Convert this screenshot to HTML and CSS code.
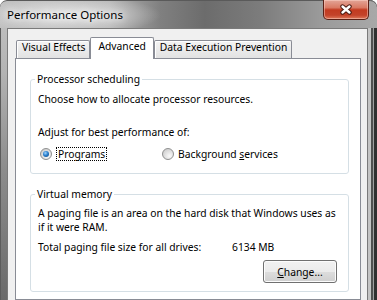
FILE: index.html
```html
<!DOCTYPE html>
<html lang="en">
<head>
  <meta charset="UTF-8" />
  <title>Performance Options</title>
  <link rel="stylesheet" href="styles.css">
</head>
<body>

  <div class="window">
    <div class="titlebar">
      <span class="title">Performance Options</span>
      <button class="close" aria-label="Close">
        <svg width="14" height="11" viewBox="0 0 14 11">
          <path d="M3.5 2.5l7 6M10.5 2.5l-7 6" stroke="#4a1a12" stroke-width="4.4" stroke-linecap="round" fill="none"/>
          <path d="M3.5 2.5l7 6M10.5 2.5l-7 6" stroke="#fff" stroke-width="2.4" stroke-linecap="round" fill="none"/>
        </svg>
      </button>
    </div>

    <div class="client">
      <div class="tabs">
        <div class="tab">Visual Effects</div>
        <div class="tab active">Advanced</div>
        <div class="tab">Data Execution Prevention</div>
      </div>

      <div class="panel">
        <fieldset class="group">
          <legend>Processor scheduling</legend>
          <p class="line first">Choose how to allocate processor resources.</p>
          <p class="line gap">Adjust for best performance of:</p>
          <div class="radios">
            <label class="option"><span class="radio checked"></span><span class="focus">Programs</span></label>
            <label class="option"><span class="radio"></span><span>Background <u>s</u>ervices</span></label>
          </div>
        </fieldset>

        <fieldset class="group vm">
          <legend>Virtual memory</legend>
          <p class="line desc">A paging file is an area on the hard disk that Windows uses as if it were RAM.</p>
          <div class="total">
            <span class="total-label">Total paging file size for all drives:</span>
            <span>6134 MB</span>
          </div>
          <div class="actions">
            <button class="btn"><u>C</u>hange...</button>
          </div>
        </fieldset>
      </div>
    </div>
  </div>

</body>
</html>
```

FILE: styles.css
```css
html, body {
  margin: 0;
  padding: 0;
  background: #fff;
  font-family: "Noto Sans", "Liberation Sans", sans-serif;
  font-size: 10.3px;
  color: #000;
}

.window {
  width: 377px;
  height: 300px;
  overflow: hidden;
  display: flex;
  flex-direction: column;
  border-radius: 7px 7px 0 0;
  background:
    linear-gradient(to right, #5c5c5c 0 1px, rgba(0, 0, 0, 0) 1px 368px, #c4c4c4 368px 371px, #505050 371px 373px, #a0a0a0 373px 374px, #303030 374px),
    linear-gradient(to bottom, #c3c3c3 0, #b4b4b4 70px, #8c8c8c 170px, #6a6a6a 100%);
}

/* заголовок окна */
.titlebar {
  height: 27px;
  flex: none;
  display: flex;
  align-items: flex-start;
  border-top: 1px solid #5a5a5a;
  border-radius: 7px 7px 0 0;
  background:
    radial-gradient(ellipse 95px 20px at 66px 14px, rgba(232, 232, 232, 0.95), rgba(232, 232, 232, 0)),
    linear-gradient(to right, #bdbdbd 0, #b3b3b3 110px, #808080 160px, #6c6c6c 205px, #7c7c7c 260px, #9a9a9a 320px, #a8a8a8 100%);
}

.title {
  padding-left: 7px;
  line-height: 28px;
  font-size: 11.5px;
  text-shadow: 0 0 6px #fff, 0 0 10px #fff;
}

.close {
  width: 46px;
  height: 20px;
  margin: -1px 8px 0 auto;
  padding: 0;
  display: flex;
  align-items: center;
  justify-content: center;
  border: 1px solid #5a2016;
  border-top: none;
  border-radius: 0 0 5px 5px;
  background: linear-gradient(#e3a597 0, #d97a64 40%, #c23a20 52%, #c4432a 80%, #de7a5c 100%);
  box-shadow: inset 0 0 0 1px rgba(255, 220, 210, 0.45);
}

.client {
  flex: 1;
  margin: 0 9px 0 7px;
  padding: 0 6px 0 7px;
  display: flex;
  flex-direction: column;
  background: #f0f0f0;
  border: 1px solid #7a7a7a;
  border-bottom: none;
}

/* вкладки */
.tabs {
  display: flex;
  align-items: flex-end;
  padding: 8px 0 0 1px;
}

.tab {
  margin-top: 3px;
  padding: 0 4px 4px 5px;
  line-height: 13px;
  border: 1px solid #898c95;
  border-bottom: none;
  border-radius: 2px 2px 0 0;
  background: linear-gradient(#f4f4f4, #e2e2e2);
  box-shadow: inset 1px 1px 0 #fff;
}

.tab.active {
  position: relative;
  z-index: 1;
  margin: 0 0 -1px;
  padding: 2px 7px 6px;
  background: #fff;
  box-shadow: none;
}

.panel {
  flex: 1;
  padding: 13px 11px 0 14px;
  background: #fff;
  border: 1px solid #898c95;
}

/* группы */
.group {
  margin: 0;
  padding: 0 11px 12px 7px;
  border: 1px solid #d5dfe5;
  border-radius: 3px;
}

.group legend {
  margin-left: -3px;
  padding: 0 2px;
  line-height: 14px;
}

.line {
  margin: 0;
  line-height: 14px;
}

.first {
  margin-top: 6px;
}

.gap {
  margin-top: 19px;
}

.radios {
  display: flex;
  margin-top: 8px;
  line-height: 14px;
}

.option {
  display: flex;
  align-items: center;
}

.option:first-child {
  width: 122px;
}

.radio {
  position: relative;
  box-sizing: border-box;
  width: 12px;
  height: 12px;
  margin: 0 4px 0 2px;
  border: 1px solid #8e8f8f;
  border-radius: 50%;
  background: radial-gradient(circle at 65% 70%, #fafafa 0, #e2e2e2 45%, #c4c4c4 100%);
}

.radio.checked::after {
  content: "";
  position: absolute;
  left: 2px;
  top: 2px;
  width: 6px;
  height: 6px;
  border-radius: 50%;
  background: radial-gradient(circle at 40% 35%, #9fd4ff 0, #2a7fcc 45%, #0d3f78 100%);
}

.focus {
  line-height: 12px;
  padding: 0 1px;
  border: 1px dotted #000;
}

.vm {
  margin-top: 13px;
  padding-bottom: 8px;
}

.desc {
  margin-top: 5px;
}

.total {
  display: flex;
  margin-top: 6px;
  line-height: 14px;
}

.total-label {
  width: 194px;
}

.actions {
  display: flex;
  justify-content: flex-end;
  margin-top: 6px;
}

.btn {
  width: 74px;
  height: 23px;
  padding: 0;
  font: inherit;
  color: #000;
  border: 1px solid #707070;
  border-radius: 3px;
  background: linear-gradient(#f2f2f2 0, #ebebeb 50%, #dddddd 51%, #cfcfcf 100%);
  box-shadow: inset 0 0 0 1px #fcfcfc;
}
```
